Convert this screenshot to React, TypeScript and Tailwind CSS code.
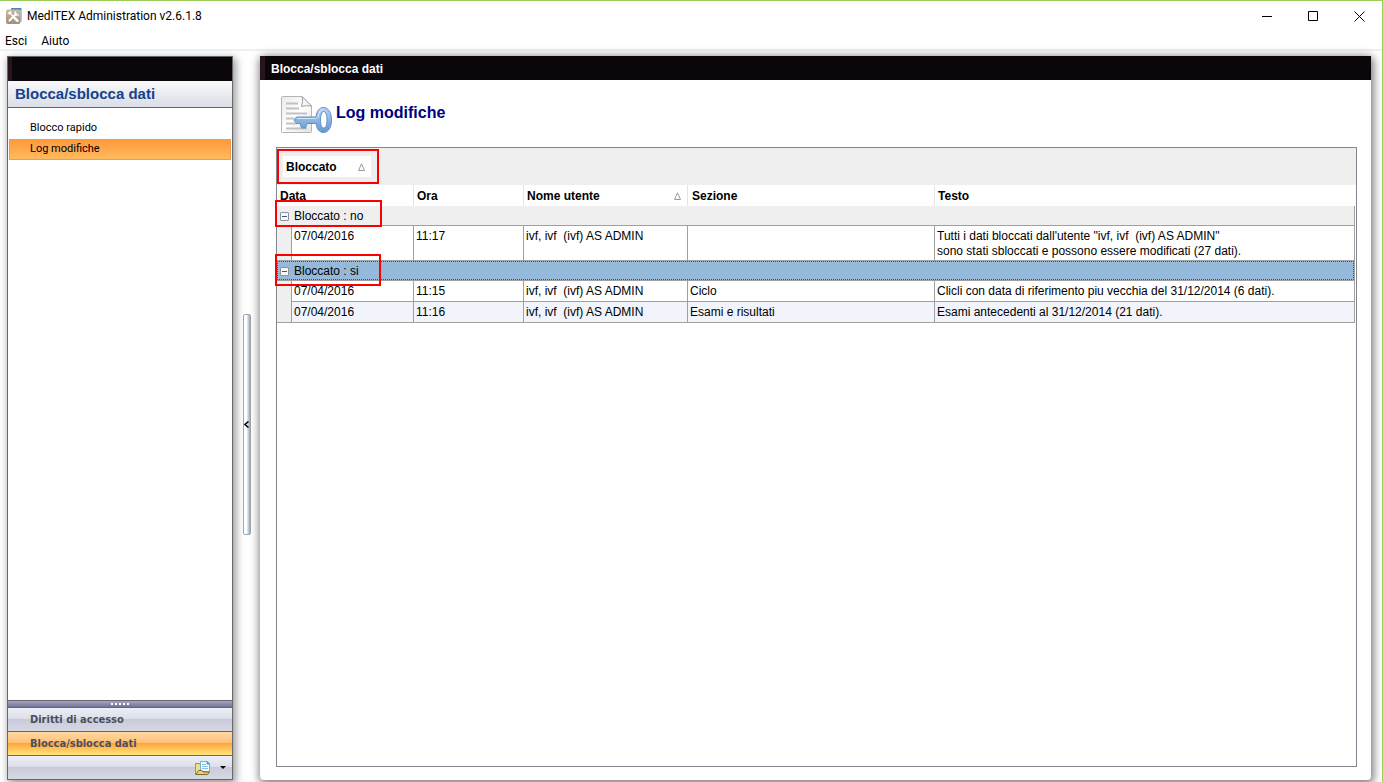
import type { ReactNode } from "react";

type LogRow = {
  date: string;
  time: string;
  user: string;
  section: string;
  text: string;
};

type LogGroup = {
  label: string;
  selected: boolean;
  rows: LogRow[];
};

const groups: LogGroup[] = [
  {
    label: "Bloccato : no",
    selected: false,
    rows: [
      {
        date: "07/04/2016",
        time: "11:17",
        user: "ivf, ivf  (ivf) AS ADMIN",
        section: "",
        text: "Tutti i dati bloccati dall'utente \"ivf, ivf  (ivf) AS ADMIN\"\nsono stati sbloccati e possono essere modificati (27 dati).",
      },
    ],
  },
  {
    label: "Bloccato : si",
    selected: true,
    rows: [
      {
        date: "07/04/2016",
        time: "11:15",
        user: "ivf, ivf  (ivf) AS ADMIN",
        section: "Ciclo",
        text: "Clicli con data di riferimento piu vecchia del 31/12/2014 (6 dati).",
      },
      {
        date: "07/04/2016",
        time: "11:16",
        user: "ivf, ivf  (ivf) AS ADMIN",
        section: "Esami e risultati",
        text: "Esami antecedenti al 31/12/2014 (21 dati).",
      },
    ],
  },
];

function AppIcon() {
  return (
    <svg width="16" height="16" viewBox="0 0 16 16" aria-hidden="true">
      <defs>
        <linearGradient id="tile" x1="0" y1="0" x2="0" y2="1">
          <stop offset="0" stopColor="#c9bba6"/>
          <stop offset="1" stopColor="#a08e78"/>
        </linearGradient>
      </defs>
      <rect x="5" y="0" width="10.500" height="13" rx="1" fill="#3f86cf"/>
      <rect x="13.500" y="2" width="2" height="12" fill="#a9c8e6"/>
      <rect x="0" y="1.500" width="14.500" height="14.500" rx="2" fill="url(#tile)"/>
      <path d="M3.500 12.500l6.500-6.500" stroke="#fff" strokeWidth="2" strokeLinecap="round"/>
      <path d="M9.500 3.500a2.300 2.300 0 0 0 3 3.200" stroke="#fff" strokeWidth="1.600" fill="none"/>
      <path d="M4 5l4 4.500" stroke="#fff" strokeWidth="1.200"/>
      <path d="M8.500 9.800l3 3" stroke="#fff" strokeWidth="2.400" strokeLinecap="round"/>
      <path d="M2.300 6l2.700-2.500" stroke="#fff" strokeWidth="2"/>
    </svg>
  );
}

function DocumentKeyIcon() {
  return (
    <svg width="52" height="38" viewBox="0 0 52 38" aria-hidden="true">
      <defs>
        <linearGradient id="paper" x1="0" y1="0" x2="1" y2="1">
          <stop offset="0" stopColor="#e9e9e9"/>
          <stop offset="0.5" stopColor="#fff"/>
          <stop offset="1" stopColor="#e4e4e4"/>
        </linearGradient>
        <linearGradient id="key" x1="0" y1="0" x2="0" y2="1">
          <stop offset="0" stopColor="#b4d4f2"/>
          <stop offset="1" stopColor="#6397d2"/>
        </linearGradient>
      </defs>
      <path d="M2.500 .5H22l9.500 9.500v25.500q0 1-1 1h-28q-1 0-1-1v-34q0-1 1-1z" fill="url(#paper)" stroke="#b4b4b4"/>
      <path d="M22 .5q1.500 5-.5 10 5-1.500 10-.5z" fill="#f6f6f6" stroke="#a0a0a0"/>
      <path d="M6 7.500h12M6 12.500h13M6 17.500h21M6 22.500h8M6 27.500h11M6 32.500h21" stroke="#c2c2c2" strokeWidth="2"/>
      <path
        fillRule="evenodd"
        d="M43.500 11.500c4.700 0 8 5 8 12.500s-3.300 12.500-8 12.500c-4.200 0-6.700-3.500-7.500-9h-9l-1.500 4.500h-4l-1.500-4.500h-3.500l-2.500-3.500 2.500-3h19.500c.8-6 3.300-9.500 7.500-9.500zm.2 4c-2.200 0-3.200 4-3.200 8.500s1 8 3.200 8 3.300-3.500 3.300-8-1.100-8.500-3.300-8.500z"
        fill="url(#key)"
        stroke="#5f90c8"
      />
      <path d="M17 22.500h19.500" stroke="#d4e8fa"/>
      <path d="M38 22c.4-5 2.300-8.500 5-9" stroke="#dceefd" fill="none"/>
    </svg>
  );
}

function FolderIcon() {
  return (
    <svg width="16" height="14" viewBox="0 0 16 14" aria-hidden="true">
      <path d="M.5 2.500h4l1 1.500v9.500h-5z" fill="#f0e08c" stroke="#a8933f"/>
      <path d="M5.500 .5h6.500l2.500 2.500v7.500h-9z" fill="#f4fbff" stroke="#6fb0dc"/>
      <path d="M12 .5v2.500h2.500z" fill="#33a5d8" stroke="#33a5d8"/>
      <path d="M7 3.500h4M7 5.500h6M7 7.500h6" stroke="#8cc0e4"/>
      <path d="M1 13.500l2.500-4h3.500l1 1.500h6.500l-2 2.500z" fill="#e9d270" stroke="#7c6a2c"/>
    </svg>
  );
}

function SortArrow() {
  return (
    <svg width="7" height="8" viewBox="0 0 7 8" aria-hidden="true">
      <path d="M3.500 .8L6.500 7.500H.5z" fill="none" stroke="#9a9a9a"/>
    </svg>
  );
}

function Highlight({ className }: { className: string }) {
  return <span className={`pointer-events-none absolute z-10 border-2 border-[#fa0000] ${className}`}/>;
}

function WindowButton({ label, children }: { label: string; children: ReactNode }) {
  return (
    <button type="button" aria-label={label} className="flex h-7 w-[46px] items-center justify-center">
      <svg width="11" height="11" viewBox="0 0 11 11" fill="none" stroke="#000" aria-hidden="true">
        {children}
      </svg>
    </button>
  );
}

function TitleBar() {
  return (
    <header className="flex h-[30px] shrink-0 items-center pl-[6px] font-[Roboto,'Noto_Sans',sans-serif]">
      <AppIcon/>
      <h1 className="ml-[5px] flex-1 text-[12px]">MedITEX Administration v2.6.1.8</h1>
      <WindowButton label="Riduci a icona"><path d="M0 5.500h10"/></WindowButton>
      <WindowButton label="Ingrandisci"><path d="M.5 .5h9v9h-9z"/></WindowButton>
      <WindowButton label="Chiudi"><path d="M.5 .5l10 10M10.500 .5l-10 10"/></WindowButton>
    </header>
  );
}

function Sidebar() {
  return (
    <aside className="flex w-[226px] shrink-0 flex-col border border-[#66676c] bg-white shadow-[2px_3px_8px_1px_rgba(0,0,0,0.4)]">
      <div className="h-6 shrink-0 border-l-4 border-[#26151f] bg-[#0b0609]"/>
      <h2 className="flex h-[27px] shrink-0 items-center border-b border-[#66676c] bg-linear-to-b from-[#f8f9fa] to-[#dadee6] pl-[7px] text-[15px] font-bold text-[#15428b]">
        Blocca/sblocca dati
      </h2>
      <nav className="flex flex-1 flex-col px-px pt-[9px] font-[Roboto,'Noto_Sans',sans-serif] text-[11px]">
        <a href="#rapido" className="flex h-[22px] items-center pl-[21px]">Blocco rapido</a>
        <a
          href="#log"
          className="flex h-[21px] items-center border border-[#f79646] bg-linear-to-b from-[#ff9a3c] to-[#ffba5e] pl-5">
          Log modifiche
        </a>
      </nav>
      <div className="flex h-2 shrink-0 items-center justify-center gap-[2px] border-y border-[#66676c] bg-linear-to-b from-[#a5a5c0] to-[#74749a]">
        <i className="size-[2px] bg-white"/>
        <i className="size-[2px] bg-white"/>
        <i className="size-[2px] bg-white"/>
        <i className="size-[2px] bg-white"/>
        <i className="size-[2px] bg-white"/>
      </div>
      <div className="flex shrink-0 flex-col font-['DejaVu_Sans_Condensed','DejaVu_Sans',sans-serif] text-[11px] font-bold text-[#4b4f5c]">
        <button
          type="button"
          className="h-6 border-b border-[#66676c] bg-[linear-gradient(to_bottom,#eceff7,#dbdee8_49%,#c9ccd8_50%,#d6d9e4)] pt-[2px] pl-[22px] text-left">
          Diritti di accesso
        </button>
        <button
          type="button"
          className="h-6 border-b border-[#66676c] bg-[linear-gradient(to_bottom,#ffd9a4,#ffbe74_49%,#ffa73c_50%,#ffe47c)] pt-[2px] pl-[22px] text-left">
          Blocca/sblocca dati
        </button>
      </div>
      <div className="flex h-[23px] shrink-0 items-center justify-end bg-[linear-gradient(to_bottom,#eceff7,#dbdee8_49%,#c9ccd8_50%,#d6d9e4)]">
        <button type="button" aria-label="Configura pulsanti" className="flex items-center gap-[9px] pr-[6px]">
          <FolderIcon/>
          <svg width="6" height="3" viewBox="0 0 6 3" aria-hidden="true"><path d="M0 0h6L3 3z"/></svg>
        </button>
      </div>
    </aside>
  );
}

function Splitter() {
  return (
    <div className="flex w-[27px] shrink-0 items-center justify-center pt-3">
      <button
        type="button"
        aria-label="Comprimi pannello"
        className="flex h-[221px] w-2 items-center justify-center rounded-[2px] border border-[#a0a3a8] bg-linear-to-r from-white from-40% to-[#86acc9]">
        <svg width="5" height="7" viewBox="0 0 5 7" fill="none" stroke="#000" strokeWidth="1.500" aria-hidden="true">
          <path d="M4.500 .5L1 3.500l3.500 3"/>
        </svg>
      </button>
    </div>
  );
}

function GroupRow({ label, selected }: { label: string; selected: boolean }) {
  return (
    <tr className={selected ? "bg-[#94b9da]" : "bg-[#efefef]"}>
      <td colSpan={6} className="relative h-5 border-r border-b border-[#a0a0a0] p-0">
        {selected && <span className="pointer-events-none absolute inset-0 border border-dotted border-[#5c4a3c]"/>}
        <div className="flex items-center gap-[5px] pt-px pl-[3px] leading-[15px]">
          <button
            type="button"
            aria-label={`Comprimi ${label}`}
            className="flex size-[9px] items-center justify-center rounded-[1px] border border-[#919191] bg-[#f8f8f8]">
            <span className="h-px w-[5px] bg-[#3a56a8]"/>
          </button>
          {label}
        </div>
        <Highlight
          className={selected ? "-top-[7px] -left-[2px] h-8 w-[106px]" : "-top-[6px] -left-[2px] h-[27px] w-[107px]"}
        />
      </td>
    </tr>
  );
}

function LogTable() {
  const cell = "border-r border-b border-[#a0a0a0] px-[2px] pt-[3px] pb-px";
  const head = "border-r border-[#e4e4e4] px-[3px] pt-px pb-0";

  return (
    <table className="w-full table-fixed border-separate border-spacing-0 text-left align-top text-[12px] leading-[15px]">
      <colgroup>
        <col className="w-[15px]"/>
        <col className="w-[122px]"/>
        <col className="w-[110px]"/>
        <col className="w-[164px]"/>
        <col className="w-[247px]"/>
        <col/>
      </colgroup>
      <thead>
        <tr className="h-[21px]">
          <th colSpan={2} className={head}>Data</th>
          <th className={head}>Ora</th>
          <th className={head}>
            <span className="flex items-center justify-between pr-[3px]">Nome utente <SortArrow/></span>
          </th>
          <th className={`${head} pl-1`}>Sezione</th>
          <th className="px-[3px] pt-px pb-0">Testo</th>
        </tr>
      </thead>
      {groups.map((group) => (
        <tbody key={group.label}>
          <GroupRow label={group.label} selected={group.selected}/>
          {group.rows.map((row, i) => (
            <tr key={row.time} className={`h-[21px] align-top whitespace-pre ${i % 2 ? "bg-[#f1f4fa]" : "bg-white"}`}>
              <td className={`border-r border-[#a0a0a0] bg-[#efefef] p-0 ${i === group.rows.length - 1 ? "border-b" : ""}`}/>
              <td className={cell}>{row.date}</td>
              <td className={cell}>{row.time}</td>
              <td className={cell}>{row.user}</td>
              <td className={cell}>{row.section}</td>
              <td className={cell}>{row.text}</td>
            </tr>
          ))}
        </tbody>
      ))}
    </table>
  );
}

function LogPanel() {
  return (
    <main className="flex min-w-0 flex-1 flex-col rounded-sm bg-white shadow-[1px_2px_8px_2px_rgba(0,0,0,0.5)]">
      <h2 className="flex h-6 shrink-0 items-center border-l-[5px] border-[#26151f] bg-[#0b0609] pt-[2px] pl-[6px] text-[12px] font-bold text-white">
        Blocca/sblocca dati
      </h2>
      <div className="flex flex-1 flex-col pt-4 pr-[14px] pb-[13px] pl-4">
        <div className="flex items-center gap-1 pb-[13px] pl-1">
          <DocumentKeyIcon/>
          <h3 className="pb-1 text-[16px] leading-[20px] font-bold text-[#000080]">Log modifiche</h3>
        </div>
        <section className="flex-1 border border-[#82868f]">
          <div className="relative flex h-[37px] items-center bg-[#efefef] pl-[6px]">
            <button
              type="button"
              className="flex h-[21px] w-[88px] items-center justify-between bg-white pr-[6px] pl-[3px] text-[12px] font-bold">
              Bloccato <SortArrow/>
            </button>
            <Highlight className="top-px left-0 h-[35px] w-[102px]"/>
          </div>
          <div className="pr-px">
            <LogTable/>
          </div>
        </section>
      </div>
    </main>
  );
}

export default function App() {
  return (
    <div className="flex h-screen flex-col overflow-hidden border-t border-r border-[#9ccc5a] bg-white font-['Liberation_Sans',Arial,sans-serif] text-black">
      <TitleBar/>
      <nav className="flex h-5 shrink-0 items-center gap-[14px] border-b-2 border-[#f0f0f0] pt-px pl-[5px] font-[Roboto,'Noto_Sans',sans-serif] text-[12px]">
        <a href="#esci">Esci</a>
        <a href="#aiuto">Aiuto</a>
      </nav>
      <div className="flex min-h-0 flex-1 pt-[5px] pr-[11px] pb-[2px] pl-[7px]">
        <Sidebar/>
        <Splitter/>
        <LogPanel/>
      </div>
    </div>
  );
}
